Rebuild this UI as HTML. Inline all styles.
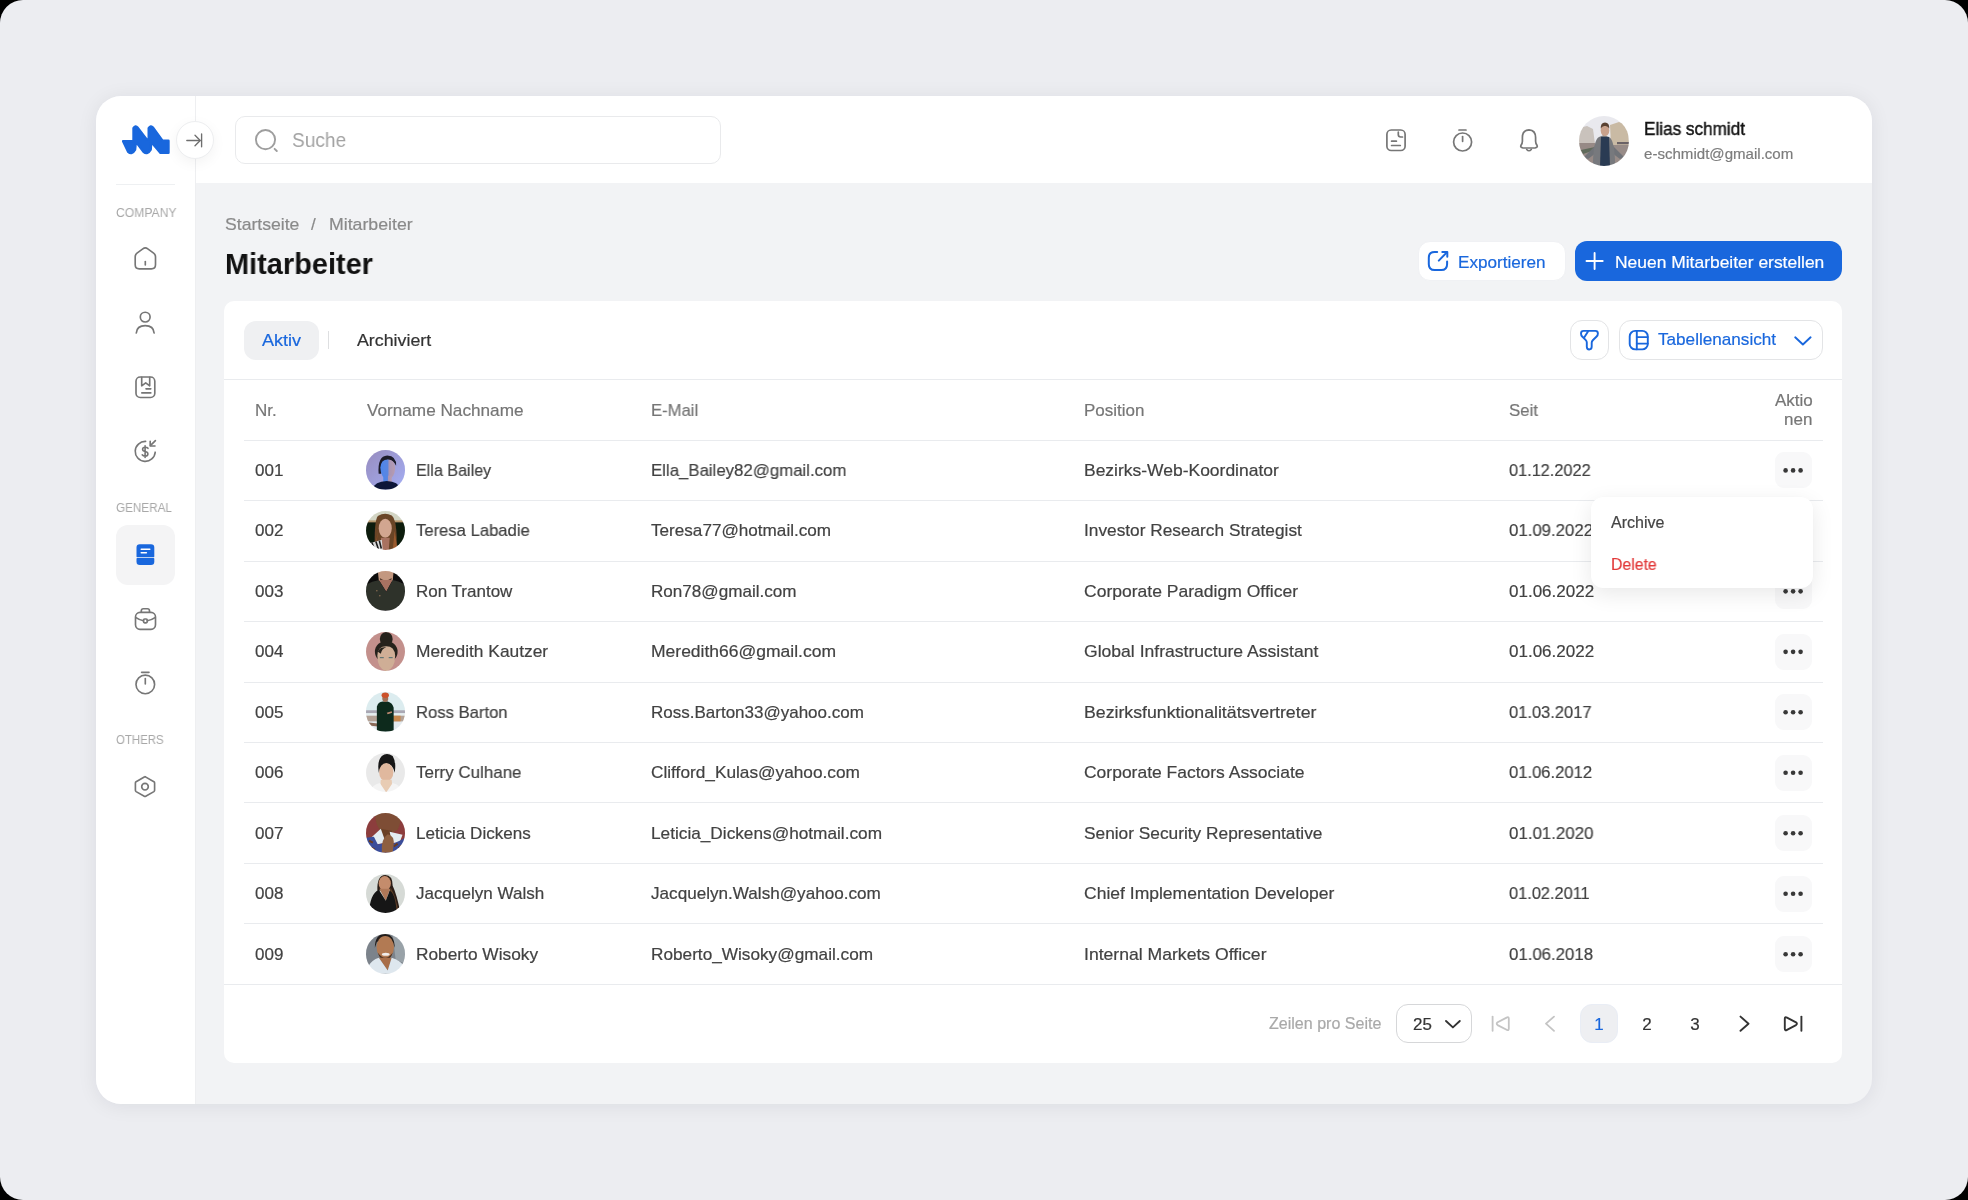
<!DOCTYPE html>
<html><head><meta charset="utf-8">
<style>
*{box-sizing:border-box;margin:0;padding:0}
html,body{width:1968px;height:1200px;overflow:hidden;background:#000}
body{font-family:"Liberation Sans",sans-serif}
.screen{position:absolute;left:0;top:0;width:1968px;height:1200px;background:#ECEDF1;border-radius:23px;overflow:hidden}
.app{position:absolute;left:96px;top:96px;width:1776px;height:1008px;border-radius:25px;background:#F2F3F5;overflow:hidden;box-shadow:0 2px 20px rgba(20,25,40,0.075)}
.side{position:absolute;left:0;top:0;width:100px;height:1008px;background:#fff;border-right:1px solid #EEEFF1}
.head{position:absolute;left:100px;top:0;width:1676px;height:87px;background:#fff}
.a{position:absolute}
.t{position:absolute;white-space:nowrap;line-height:1;will-change:transform;-webkit-text-stroke:0.2px currentColor}
.ln{position:absolute;height:1px;background:#E9EBEE}
.act{position:absolute;left:1774.5px;width:37px;height:36px;border-radius:9px;background:#F8F8F9}
.av{position:absolute;left:365.8px;width:39.5px;height:39.5px;border-radius:50%;overflow:hidden}
</style></head>
<body>
<svg width="0" height="0" style="position:absolute"><defs><filter id="soft" x="-5%" y="-5%" width="110%" height="110%"><feGaussianBlur stdDeviation="0.55"/></filter></defs></svg>
<div class="screen">
 <div class="app">
   <div class="side"></div>
   <div class="head"></div>
 </div>
 <!-- sidebar separator under logo -->
 <div class="a" style="left:116px;top:183.5px;width:59px;height:1px;background:#EEF0F2"></div>
 <!-- active nav -->
 <div class="a" style="left:115.8px;top:525px;width:59px;height:59.6px;border-radius:12px;background:#F4F4F5"></div>
 <!-- collapse button -->
 <div class="a" style="left:175.5px;top:121px;width:38px;height:38px;border-radius:50%;background:#fff;border:1px solid #EDEEF0;box-shadow:0 4px 14px rgba(0,0,0,0.05)"></div>
 <!-- search box -->
 <div class="a" style="left:234.5px;top:116.4px;width:486px;height:48px;border-radius:10px;background:#fff;border:1px solid #E9EAEC"></div>
 <!-- header avatar -->
 <div class="a" style="left:1578.8px;top:116px;width:49.8px;height:49.8px;border-radius:50%;overflow:hidden">
  <svg width="50" height="50" viewBox="0 0 50 50"><g filter="url(#soft)">
   <rect width="50" height="50" fill="#E9E9EE"/>
   <path d="M0 12 L8 10 L14 13 L16 28 L0 30Z" fill="#C9C2BC"/>
   <path d="M31 9 L40 6 L49 10 L50 30 L32 30Z" fill="#C9BAA4"/>
   <rect x="38" y="26" width="12" height="2.2" fill="#6A6266"/>
   <path d="M0 27 L16 27 L18 50 L0 50Z" fill="#978A86"/>
   <path d="M34 29 L50 29 L50 50 L32 50Z" fill="#988C88"/>
   <path d="M2 34 L16 31 L16 34 L4 38Z" fill="#5E6A5A"/>
   <path d="M14 50 L16 30 L7 39 L5 41 L9 43 L17 37 L17 50Z" fill="#707378"/>
   <path d="M36 50 L34 30 L43 39 L45 41 L41 43 L33 37 L33 50Z" fill="#707378"/>
   <path d="M14 50 Q14 24 20 21 L25 19 L30 21 Q36 24 36 50Z" fill="#77797D"/>
   <path d="M21 50 L22 21 L30 21 L31 50Z" fill="#2C3B52"/>
   <ellipse cx="26" cy="14.5" rx="4.3" ry="5.5" fill="#C9A28C"/>
   <path d="M21.7 12.5 Q21.5 6.5 26 6.5 Q30.5 6.5 30.3 12.5 Q28.5 9.5 26 10 Q23.5 9.5 21.7 12.5Z" fill="#5A4232"/>
  </g></svg>
 </div>
 <!-- buttons -->
 <div class="a" style="left:1417.5px;top:240.5px;width:148px;height:40.5px;border-radius:12px;background:#fff;border:1px solid #F0F1F4"></div>
 <div class="a" style="left:1574.8px;top:241.2px;width:267.7px;height:39.5px;border-radius:12px;background:#1967DD"></div>
 <!-- card -->
 <div class="a" style="left:224.2px;top:301px;width:1618px;height:761.5px;border-radius:10px;background:#fff"></div>
 <!-- tabs -->
 <div class="a" style="left:244.1px;top:320.6px;width:74.7px;height:39.1px;border-radius:12px;background:#EFF0F2"></div>
 <div class="a" style="left:328.3px;top:331.3px;width:1px;height:17.4px;background:#DEDFE1"></div>
 <div class="a" style="left:1569.7px;top:320.2px;width:39.8px;height:39.7px;border-radius:12px;border:1px solid #E3E4E6;background:#fff"></div>
 <div class="a" style="left:1619px;top:320.2px;width:203.5px;height:39.7px;border-radius:12px;border:1px solid #E3E4E6;background:#fff"></div>
 <!-- lines -->
 <div class="ln" style="left:224.2px;top:379.3px;width:1618px"></div>
 <div class=ln style='left:244.1px;top:439.6px;width:1578.5px'></div>
<div class=ln style='left:244.1px;top:500.08px;width:1578.5px'></div>
<div class=ln style='left:244.1px;top:560.56px;width:1578.5px'></div>
<div class=ln style='left:244.1px;top:621.04px;width:1578.5px'></div>
<div class=ln style='left:244.1px;top:681.52px;width:1578.5px'></div>
<div class=ln style='left:244.1px;top:742.00px;width:1578.5px'></div>
<div class=ln style='left:244.1px;top:802.48px;width:1578.5px'></div>
<div class=ln style='left:244.1px;top:862.96px;width:1578.5px'></div>
<div class=ln style='left:244.1px;top:923.44px;width:1578.5px'></div>
<div class=ln style='left:224.2px;top:983.92px;width:1618px'></div>
<div class=act style='top:452.20px'></div>
<div class=av style='top:450.45px'><svg width='39.5' height='39.5' viewBox='0 0 40 40'><g filter='url(#soft)'><defs><linearGradient id="g1" x1="0" y1="0" x2="1" y2="1"><stop offset="0" stop-color="#978CBE"/><stop offset="1" stop-color="#A4AEF4"/></linearGradient><linearGradient id="f1" x1="0" y1="0" x2="1" y2="0"><stop offset="0" stop-color="#4C86EC"/><stop offset="0.5" stop-color="#5A86E0"/><stop offset="0.6" stop-color="#A894B4"/><stop offset="1" stop-color="#B89CB0"/></linearGradient></defs><rect width="40" height="40" fill="url(#g1)"/><path d="M12.8 24 Q11.5 6 21.5 5.5 Q31 6 30.5 16 Q27 9.5 21 10 Q16 11 15.5 24Z" fill="#1D1B2A"/><path d="M14.5 18 Q15 9.5 22 9.5 Q29.5 9.5 29.5 18.5 Q29 28.5 22 30 Q15 28.5 14.5 18Z" fill="url(#f1)"/><path d="M17.5 26 L26 26 L26 33 L17.5 33Z" fill="url(#f1)"/><path d="M6 40 Q9 32 21 31.5 Q33 32 35 40Z" fill="#0E1838"/></g></svg></div>
<div class=act style='top:512.68px'></div>
<div class=av style='top:510.93px'><svg width='39.5' height='39.5' viewBox='0 0 40 40'><g filter='url(#soft)'><rect width="40" height="40" fill="#111A11"/><rect width="40" height="10.5" fill="#D3D5C4"/><rect y="9.5" width="40" height="2" fill="#B89A70"/><path d="M9 40 Q8 10 12 5 Q19 1 26 4.5 Q32 9 31 40Z" fill="#6A4426"/><path d="M10 40 L12 20 L9 40Z M29 20 L32 40 L27 40Z" fill="#9A5A2E"/><ellipse cx="19.5" cy="17.5" rx="6.6" ry="9.6" fill="#D2A690"/><path d="M15 27 L24 27 L23 40 L16 40Z" fill="#A87260"/><path d="M3 33 L16 29 L17 40 L6 40Z" fill="#DADADA"/><path d="M6 32 L9 40 M10 31 L13 40 M13.5 30 L15.5 38" stroke="#1A1A1A" stroke-width="1.6"/></g></svg></div>
<div class=act style='top:573.16px'></div>
<div class=av style='top:571.41px'><svg width='39.5' height='39.5' viewBox='0 0 40 40'><g filter='url(#soft)'><rect width="40" height="40" fill="#0B0B0B"/><path d="M12 0 H28 L27 10 Q20 13 13 10Z" fill="#C39880"/><path d="M14 7 Q20 12 26 7 L25.5 10.5 Q20 13 14.5 10.5Z" fill="#5A3E30"/><path d="M13 9 L27 9 L20.5 21Z" fill="#A87262"/><path d="M0 40 L0 14 Q6 10 13 9 L20.5 21 L27 9 Q34 10 40 14 L40 40Z" fill="#2E302B"/><circle cx="11" cy="20" r="0.8" fill="#8A7050"/><circle cx="14" cy="25" r="0.8" fill="#8A7050"/></g></svg></div>
<div class=act style='top:633.64px'></div>
<div class=av style='top:631.89px'><svg width='39.5' height='39.5' viewBox='0 0 40 40'><g filter='url(#soft)'><rect width="40" height="40" fill="#C3908C"/><ellipse cx="20.5" cy="7" rx="6.5" ry="7" fill="#28241E"/><ellipse cx="20.5" cy="20" rx="11.5" ry="11" fill="#28241E"/><path d="M11.5 24 Q12 14.5 20.5 14.5 Q29 14.5 29.5 24 Q29.5 37 20.5 40 Q11.5 37 11.5 24Z" fill="#CFAE96"/><path d="M12 20 Q14 15 20.5 15.5 Q16 17 15 22Z" fill="#28241E"/><rect x="14" y="25.5" width="4" height="1" fill="#4A6A70"/><rect x="23" y="25.5" width="4" height="1" fill="#4A6A70"/></g></svg></div>
<div class=act style='top:694.12px'></div>
<div class=av style='top:692.37px'><svg width='39.5' height='39.5' viewBox='0 0 40 40'><g filter='url(#soft)'><rect width="40" height="40" fill="#DCECEF"/><rect y="18.5" width="40" height="3" fill="#AAA8B4"/><rect y="21.5" width="40" height="3" fill="#E6EEF0"/><rect y="24" width="40" height="6" fill="#B4A296"/><rect x="27" y="24" width="8" height="6" fill="#C8884E"/><rect y="30" width="40" height="10" fill="#E4EAEE"/><path d="M3 31 L12 32 L12 35 L3 34Z" fill="#8A6A58"/><path d="M11 40 L11 15 Q12 10 17 9.5 L22 9.5 Q27 11 28 16 L28 40Z" fill="#0C2A1E"/><ellipse cx="19.5" cy="6.5" rx="3" ry="3.5" fill="#A07058"/><ellipse cx="19.5" cy="3.2" rx="3.7" ry="2.8" fill="#CC512A"/><path d="M21 21 L26 19.5 L26.5 21 L22 22.5Z" fill="#C08A70"/></g></svg></div>
<div class=act style='top:754.60px'></div>
<div class=av style='top:752.85px'><svg width='39.5' height='39.5' viewBox='0 0 40 40'><g filter='url(#soft)'><rect width="40" height="40" fill="#E9E9E9"/><path d="M13 20 Q11 8 16 3 Q21 -1 27 3 Q31 9 29 20 Q27 11 21 11 Q15 11 13 20Z" fill="#161616"/><ellipse cx="20.5" cy="19.5" rx="7.2" ry="9.3" fill="#E0B89E"/><path d="M15 27 L26 27 L27 40 L14 40Z" fill="#E8CCB4"/><path d="M4 40 Q6 32 14 30.5 L20.5 40 L27 30.5 Q35 32 36 40Z" fill="#F4F4F4"/></g></svg></div>
<div class=act style='top:815.08px'></div>
<div class=av style='top:813.33px'><svg width='39.5' height='39.5' viewBox='0 0 40 40'><g filter='url(#soft)'><rect width="40" height="40" fill="#8C3C3C"/><path d="M9 0 L34 0 Q36 10 32 17 Q26 21 18 20 Q12 17 10 8Z" fill="#7E4E34"/><path d="M14 16 L26 18 L27 26 L15 26Z" fill="#6A4028"/><path d="M4 26 L15 16 L20 30 L10 32Z" fill="#E4ECF2"/><path d="M24 19 L37 22 L34 30 L26 30Z" fill="#E4ECF2"/><path d="M0 40 L0 25 L8 24 L12 32 L20 30 L28 31 L34 28 L40 25 L40 40Z" fill="#3A4E9A"/><path d="M3 28 L7 30 M28 34 L32 31 M5 35 L9 37 M33 36 L36 33" stroke="#6A3A20" stroke-width="2"/><path d="M16 40 Q15 26 22 21.5 Q29 23 28 32 L27 40Z" fill="#8E5E40"/></g></svg></div>
<div class=act style='top:875.56px'></div>
<div class=av style='top:873.81px'><svg width='39.5' height='39.5' viewBox='0 0 40 40'><g filter='url(#soft)'><rect width="40" height="40" fill="#D6DAD6"/><path d="M11.5 17 Q11 1 19.5 1 Q27 1 27 12 Q31 20 35 40 L23 40 Q24 25 24 16Z" fill="#2A1E16"/><path d="M25 14 Q31 24 33 40 L27 40 Q27 26 24 18Z" fill="#5A3C28"/><ellipse cx="19" cy="9.5" rx="6.2" ry="7.5" fill="#C48C6C"/><path d="M13.5 15 L24.5 15 L20 27Z" fill="#B07858"/><path d="M3 40 Q4 20 13 16 L20 27 L24 17 Q30 20 31 40Z" fill="#141414"/></g></svg></div>
<div class=act style='top:936.04px'></div>
<div class=av style='top:934.29px'><svg width='39.5' height='39.5' viewBox='0 0 40 40'><g filter='url(#soft)'><rect width="40" height="40" fill="#7C838B"/><path d="M27 0 L40 0 L40 30 L30 26Z" fill="#99A2A8"/><path d="M9 14 Q9 0 19 0 Q29 0 29 14 L27 8 Q19 3 11 8Z" fill="#241E1A"/><ellipse cx="19.5" cy="13.5" rx="8.8" ry="11.5" fill="#B27A52"/><path d="M12 19 Q19.5 29 27 19 Q25 26 19.5 26.5 Q14 26 12 19Z" fill="#4A3020"/><ellipse cx="20" cy="20.5" rx="4" ry="1.6" fill="#F0ECEA"/><path d="M13 24 L26 24 L22 37Z" fill="#A86E48"/><path d="M2 33 Q6 26 13 24 L22 37 L26 24 Q35 27 38 32 L36 40 L4 40Z" fill="#DEE7EE"/></g></svg></div>
<svg class=a style='left:0;top:0' width='1968' height='1200'><g fill='#383838'><circle cx='1785.6' cy='470.40' r='2.3'/><circle cx='1793.1' cy='470.40' r='2.3'/><circle cx='1800.6' cy='470.40' r='2.3'/><circle cx='1785.6' cy='530.88' r='2.3'/><circle cx='1793.1' cy='530.88' r='2.3'/><circle cx='1800.6' cy='530.88' r='2.3'/><circle cx='1785.6' cy='591.36' r='2.3'/><circle cx='1793.1' cy='591.36' r='2.3'/><circle cx='1800.6' cy='591.36' r='2.3'/><circle cx='1785.6' cy='651.84' r='2.3'/><circle cx='1793.1' cy='651.84' r='2.3'/><circle cx='1800.6' cy='651.84' r='2.3'/><circle cx='1785.6' cy='712.32' r='2.3'/><circle cx='1793.1' cy='712.32' r='2.3'/><circle cx='1800.6' cy='712.32' r='2.3'/><circle cx='1785.6' cy='772.80' r='2.3'/><circle cx='1793.1' cy='772.80' r='2.3'/><circle cx='1800.6' cy='772.80' r='2.3'/><circle cx='1785.6' cy='833.28' r='2.3'/><circle cx='1793.1' cy='833.28' r='2.3'/><circle cx='1800.6' cy='833.28' r='2.3'/><circle cx='1785.6' cy='893.76' r='2.3'/><circle cx='1793.1' cy='893.76' r='2.3'/><circle cx='1800.6' cy='893.76' r='2.3'/><circle cx='1785.6' cy='954.24' r='2.3'/><circle cx='1793.1' cy='954.24' r='2.3'/><circle cx='1800.6' cy='954.24' r='2.3'/></g></svg>
 <!-- pagination -->
 <div class="a" style="left:1396.2px;top:1003.9px;width:75.7px;height:38.7px;border-radius:12px;border:1.3px solid #D6D7D9;background:#fff"></div>
 <div class="a" style="left:1579.6px;top:1003.9px;width:38.2px;height:39.2px;border-radius:12px;background:#EEEFF2;border:1px solid #E9EDF5"></div>
 <svg class="a" style="left:0;top:0" width="1968" height="1200" viewBox="0 0 1968 1200" fill="none" stroke-linecap="round" stroke-linejoin="round">
 <!-- logo -->
 <path d="M123.2 141.2 L133.6 141.2 L133.6 128.3 Q135.5 125.2 137.4 127.6 L146.6 139.5 L148.8 139.5 L148.8 128.3 Q150.8 125.2 152.8 127.6 L162.4 140.8 L168.4 140.8 L168.4 152.8 L160.6 152.8 L152.6 143.3 L151 143.3 L150.6 149.7 Q147.5 155 143.6 151.8 L137.2 143.3 L135.6 143.3 L135 149.7 Q132 155 128.2 151.8 Z" fill="#1967DD" stroke="#1967DD" stroke-width="2.6"/>
 <!-- collapse arrow -->
 <g stroke="#6E6E6E" stroke-width="1.35">
  <path d="M186.8 140.5 H200"/>
  <path d="M195 135.3 L200.2 140.5 L195 145.7"/>
  <path d="M201.6 134 V146.8"/>
 </g>
 <!-- search -->
 <g stroke="#9E9E9E" stroke-width="1.9">
  <circle cx="265.5" cy="139.6" r="9.6"/>
  <path d="M274.6 148.8 L276.8 151"/>
 </g>
 <!-- header icons -->
 <g stroke="#767676" stroke-width="1.7">
  <rect x="1386.9" y="130" width="18.2" height="20.5" rx="4.3"/>
  <path d="M1398.3 132.2 V134.6 Q1398.3 137 1400.7 137 H1402.5"/>
  <path d="M1391.6 141.2 H1396.4"/>
  <path d="M1391.6 145.5 H1400.3"/>
  <circle cx="1462.6" cy="142" r="9"/>
  <path d="M1459 130 H1466"/>
  <path d="M1462.6 136.6 V141.3"/>
  <path d="M1529 129.8 Q1522.4 130.2 1522.4 137.5 V141.2 Q1522.4 143.3 1521 145.3 Q1520 147.5 1523 148 H1535 Q1538 147.5 1537 145.3 Q1535.6 143.3 1535.6 141.2 V137.5 Q1535.6 130.2 1529 129.8 Z"/>
  <path d="M1526.7 149.5 Q1529 152 1531.3 149.5"/>
 </g>
 <!-- sidebar icons -->
 <g stroke="#767676" stroke-width="1.65">
  <!-- home -->
  <path d="M135.2 256.8 Q135.2 254.6 137 253.2 L142.8 248.9 Q145.3 247 147.8 248.9 L153.6 253.2 Q155.5 254.6 155.5 256.8 V264.8 Q155.5 268.9 151.4 268.9 H139.3 Q135.2 268.9 135.2 264.8 Z"/>
  <path d="M145.3 261.6 V265"/>
  <!-- user -->
  <circle cx="145.2" cy="317.1" r="4.9"/>
  <path d="M136.3 333 Q136.8 325.6 145.2 325.6 Q153.6 325.6 154.1 333"/>
  <!-- box -->
  <rect x="136" y="377" width="18.8" height="20.5" rx="4.2"/>
  <path d="M141.7 377.3 V385.8 L145.7 382.8 L149.7 385.8 V377.3"/>
  <path d="M146 388.8 H150.8"/>
  <path d="M141.8 392.9 H150.8"/>
  <!-- dollar -->
  <path d="M155.2 452.2 A10 10 0 1 1 145.6 441.4"/>
  <path d="M155.4 440.6 L150.6 445.4"/>
  <path d="M150.2 441.2 V446 H155"/>
  <path d="M148 448.3 Q147.2 447.2 145.1 447.2 Q142.6 447.2 142.6 449.3 Q142.6 451.1 145.1 451.5 Q147.9 451.9 147.9 454 Q147.9 456.1 145.1 456.1 Q143.1 456.1 142.2 454.8 M145.1 445.7 V457.5" stroke-width="1.6"/>
  <!-- briefcase -->
  <rect x="135.5" y="612.4" width="20" height="16.9" rx="4.5"/>
  <path d="M141.3 612.2 V610.8 Q141.3 608.7 143.4 608.7 H147.4 Q149.5 608.7 149.5 610.8 V612.2"/>
  <path d="M136 617.6 Q140 620.3 143.6 620.8 M147.2 620.8 Q151 620.3 155 617.6"/>
  <rect x="143.5" y="619" width="3.8" height="3.8" rx="1.2"/>
  <!-- timer -->
  <circle cx="145.3" cy="684.4" r="9.3"/>
  <path d="M141.6 672.3 H149"/>
  <path d="M145.3 678.6 V684"/>
  <!-- settings -->
  <path d="M145 776.6 L153.9 781.7 Q154.6 782.2 154.6 783 V790.3 Q154.6 791.1 153.9 791.6 L145.7 796.3 Q145 796.7 144.3 796.3 L136.1 791.6 Q135.4 791.1 135.4 790.3 V783 Q135.4 782.2 136.1 781.7 L144.3 777 Q145 776.6 145.7 777 Z"/>
  <circle cx="145" cy="786.7" r="3.3"/>
 </g>
 <!-- active nav icon -->
 <g>
  <path d="M139.8 544.3 H151 Q154.3 544.3 154.3 547.6 V556.6 Q154.3 557.3 153.6 557.2 H137.2 Q136.5 557.3 136.5 556.6 V547.6 Q136.5 544.3 139.8 544.3 Z" fill="#1967DD"/>
  <path d="M137.2 558 H153.6 Q154.3 558 154.3 558.7 V561.7 Q154.3 565 151 565 H139.8 Q136.5 565 136.5 561.7 V558.7 Q136.5 558 137.2 558 Z" fill="#1967DD"/>
  <path d="M141.2 549.2 H149.8 M141.2 552.7 H146.4" stroke="#fff" stroke-width="1.5"/>
 </g>
 <!-- export icon -->
 <g stroke="#1967DD" stroke-width="2">
  <path d="M1437.2 251.9 H1434.6 Q1428.8 251.9 1428.8 257.7 V264.3 Q1428.8 270.1 1434.6 270.1 H1441.3 Q1447.1 270.1 1447.1 264.3 V261.5"/>
  <path d="M1438.8 260.6 L1446.6 252.6"/>
  <path d="M1442.3 251.9 H1447.3 V256.7"/>
 </g>
 <!-- plus -->
 <g stroke="#fff" stroke-width="1.9">
  <path d="M1586.5 261 H1602.7 M1594.6 252.9 V269.1"/>
 </g>
 <!-- filter -->
 <g stroke="#1967DD" stroke-width="1.9">
  <path d="M1583.6 330.9 H1595.4 Q1597.9 330.9 1597.9 333.4 Q1597.9 335.2 1596.6 336.5 L1592.8 340.2 Q1591.7 341.3 1591.7 342.8 V346.6 Q1591.7 349.5 1589.2 349.5 Q1586.8 349.5 1586.8 346.8 V342.6 Q1586.8 341.2 1585.8 340.2 L1582.2 336.5 Q1581 335.2 1581 333.4 Q1581 330.9 1583.6 330.9 Z"/>
  <path d="M1588 331.4 L1584.2 337.5"/>
 </g>
 <!-- table icon -->
 <g stroke="#1967DD" stroke-width="1.9">
  <rect x="1629.7" y="330.9" width="18.1" height="18.5" rx="5.5"/>
  <path d="M1636.8 331 V349.3"/>
  <path d="M1636.8 337.1 H1647.7 M1636.8 343.6 H1647.7"/>
  <path d="M1795.2 337.3 L1802.9 344.5 L1810.6 337.3"/>
 </g>
 <!-- pagination icons -->
 <g stroke="#333" stroke-width="1.9">
  <path d="M1446 1021 L1452.9 1027.4 L1459.8 1021"/>
 </g>
 <g stroke="#C4C4C4" stroke-width="1.8">
  <path d="M1492.6 1016.6 V1030.8"/>
  <path d="M1508.8 1018.8 V1028.6 Q1508.8 1031 1506.6 1029.8 L1497.6 1025.1 Q1495.8 1023.7 1497.6 1022.3 L1506.6 1017.6 Q1508.8 1016.4 1508.8 1018.8 Z"/>
  <path d="M1554 1016.6 L1546 1023.7 L1554 1030.8"/>
 </g>
 <g stroke="#333" stroke-width="1.9">
  <path d="M1740.5 1016.6 L1748.5 1023.7 L1740.5 1030.8"/>
  <path d="M1801.4 1016.6 V1030.8"/>
  <path d="M1784.8 1018.8 V1028.6 Q1784.8 1031 1787 1029.8 L1796 1025.1 Q1797.8 1023.7 1796 1022.3 L1787 1017.6 Q1784.8 1016.4 1784.8 1018.8 Z"/>
 </g>
</svg>

 <div class=t id=t0 style='left:291.90px;top:129.95px;font-size:20.5px;color:#A3A3A3;font-weight:400;transform:scaleX(0.9322);transform-origin:left center;-webkit-text-stroke:0;'>Suche</div><div class=t id=t1 style='left:1644.00px;top:121.19px;font-size:17.5px;color:#161616;font-weight:400;transform:scaleX(0.9797);transform-origin:left center;-webkit-text-stroke:0.45px #161616;'>Elias schmidt</div><div class=t id=t2 style='left:1644.00px;top:146.00px;font-size:15px;color:#7C7C7C;font-weight:400;transform:scaleX(1.0048);transform-origin:left center;'>e-schmidt@gmail.com</div><div class=t id=t3 style='left:116.00px;top:206.92px;font-size:12.5px;color:#A8A8A8;font-weight:400;transform:scaleX(0.9714);transform-origin:left center;-webkit-text-stroke:0;'>COMPANY</div><div class=t id=t4 style='left:115.80px;top:502.32px;font-size:12.5px;color:#A8A8A8;font-weight:400;transform:scaleX(0.9356);transform-origin:left center;-webkit-text-stroke:0;'>GENERAL</div><div class=t id=t5 style='left:115.90px;top:734.32px;font-size:12.5px;color:#A8A8A8;font-weight:400;transform:scaleX(0.9137);transform-origin:left center;-webkit-text-stroke:0;'>OTHERS</div><div class=t id=t6 style='left:225.00px;top:216.21px;font-size:17px;color:#8A8A8A;font-weight:400;transform:scaleX(1.0360);transform-origin:left center;'>Startseite</div><div class=t id=t7 style='left:310.80px;top:216.21px;font-size:17px;color:#8A8A8A;font-weight:400;'>/</div><div class=t id=t8 style='left:328.70px;top:216.21px;font-size:17px;color:#8A8A8A;font-weight:400;transform:scaleX(1.0422);transform-origin:left center;'>Mitarbeiter</div><div class=t id=t9 style='left:225.40px;top:249.03px;font-size:29.5px;color:#111111;font-weight:700;transform:scaleX(0.9812);transform-origin:left center;-webkit-text-stroke:0;'>Mitarbeiter</div><div class=t id=t10 style='left:1458.40px;top:253.51px;font-size:17px;color:#1967DD;font-weight:400;transform:scaleX(1.0076);transform-origin:left center;'>Exportieren</div><div class=t id=t11 style='left:1615.00px;top:253.51px;font-size:17px;color:#FFFFFF;font-weight:400;transform:scaleX(1.0254);transform-origin:left center;'>Neuen Mitarbeiter erstellen</div><div class=t id=t12 style='left:261.60px;top:332.21px;font-size:17px;color:#1967DD;font-weight:400;transform:scaleX(1.0612);transform-origin:left center;'>Aktiv</div><div class=t id=t13 style='left:356.70px;top:332.21px;font-size:17px;color:#333333;font-weight:400;transform:scaleX(1.0471);transform-origin:left center;'>Archiviert</div><div class=t id=t14 style='left:1657.90px;top:331.31px;font-size:17px;color:#1967DD;font-weight:400;transform:scaleX(1.0077);transform-origin:left center;'>Tabellenansicht</div><div class=t id=t15 style='left:254.50px;top:401.91px;font-size:17px;color:#767676;font-weight:400;'>Nr.</div><div class=t id=t16 style='left:366.50px;top:401.91px;font-size:17px;color:#767676;font-weight:400;transform:scaleX(1.0098);transform-origin:left center;'>Vorname Nachname</div><div class=t id=t17 style='left:651.20px;top:401.91px;font-size:17px;color:#767676;font-weight:400;transform:scaleX(0.9798);transform-origin:left center;'>E-Mail</div><div class=t id=t18 style='left:1083.70px;top:401.91px;font-size:17px;color:#767676;font-weight:400;'>Position</div><div class=t id=t19 style='left:1509.30px;top:401.91px;font-size:17px;color:#767676;font-weight:400;transform:scaleX(0.9899);transform-origin:left center;'>Seit</div><div class=t id=t20 style='right:155.70px;top:391.61px;font-size:17px;color:#767676;font-weight:400;'>Aktio</div><div class=t id=t21 style='right:155.70px;top:411.41px;font-size:17px;color:#767676;font-weight:400;'>nen</div><div class=t id=t22 style='left:254.50px;top:462.01px;font-size:17px;color:#424242;font-weight:400;'>001</div><div class=t id=t23 style='left:415.80px;top:462.01px;font-size:17px;color:#424242;font-weight:400;transform:scaleX(0.9474);transform-origin:left center;'>Ella Bailey</div><div class=t id=t24 style='left:651.20px;top:462.01px;font-size:17px;color:#424242;font-weight:400;transform:scaleX(0.9882);transform-origin:left center;'>Ella_Bailey82@gmail.com</div><div class=t id=t25 style='left:1083.70px;top:462.01px;font-size:17px;color:#424242;font-weight:400;transform:scaleX(1.0275);transform-origin:left center;'>Bezirks-Web-Koordinator</div><div class=t id=t26 style='left:1509.00px;top:462.01px;font-size:17px;color:#424242;font-weight:400;transform:scaleX(0.9589);transform-origin:left center;'>01.12.2022</div><div class=t id=t27 style='left:254.50px;top:522.49px;font-size:17px;color:#424242;font-weight:400;'>002</div><div class=t id=t28 style='left:415.80px;top:522.49px;font-size:17px;color:#424242;font-weight:400;transform:scaleX(0.9788);transform-origin:left center;'>Teresa Labadie</div><div class=t id=t29 style='left:651.20px;top:522.49px;font-size:17px;color:#424242;font-weight:400;transform:scaleX(1.0070);transform-origin:left center;'>Teresa77@hotmail.com</div><div class=t id=t30 style='left:1083.70px;top:522.49px;font-size:17px;color:#424242;font-weight:400;transform:scaleX(1.0155);transform-origin:left center;'>Investor Research Strategist</div><div class=t id=t31 style='left:1509.00px;top:522.49px;font-size:17px;color:#424242;font-weight:400;transform:scaleX(0.9871);transform-origin:left center;'>01.09.2022</div><div class=t id=t32 style='left:254.50px;top:582.97px;font-size:17px;color:#424242;font-weight:400;'>003</div><div class=t id=t33 style='left:415.80px;top:582.97px;font-size:17px;color:#424242;font-weight:400;'>Ron Trantow</div><div class=t id=t34 style='left:651.20px;top:582.97px;font-size:17px;color:#424242;font-weight:400;transform:scaleX(1.0053);transform-origin:left center;'>Ron78@gmail.com</div><div class=t id=t35 style='left:1083.70px;top:582.97px;font-size:17px;color:#424242;font-weight:400;transform:scaleX(1.0310);transform-origin:left center;'>Corporate Paradigm Officer</div><div class=t id=t36 style='left:1509.00px;top:582.97px;font-size:17px;color:#424242;font-weight:400;'>01.06.2022</div><div class=t id=t37 style='left:254.50px;top:643.45px;font-size:17px;color:#424242;font-weight:400;'>004</div><div class=t id=t38 style='left:415.80px;top:643.45px;font-size:17px;color:#424242;font-weight:400;transform:scaleX(1.0204);transform-origin:left center;'>Meredith Kautzer</div><div class=t id=t39 style='left:651.20px;top:643.45px;font-size:17px;color:#424242;font-weight:400;transform:scaleX(1.0290);transform-origin:left center;'>Meredith66@gmail.com</div><div class=t id=t40 style='left:1083.70px;top:643.45px;font-size:17px;color:#424242;font-weight:400;transform:scaleX(1.0332);transform-origin:left center;'>Global Infrastructure Assistant</div><div class=t id=t41 style='left:1509.00px;top:643.45px;font-size:17px;color:#424242;font-weight:400;'>01.06.2022</div><div class=t id=t42 style='left:254.50px;top:703.93px;font-size:17px;color:#424242;font-weight:400;'>005</div><div class=t id=t43 style='left:415.80px;top:703.93px;font-size:17px;color:#424242;font-weight:400;transform:scaleX(0.9792);transform-origin:left center;'>Ross Barton</div><div class=t id=t44 style='left:651.20px;top:703.93px;font-size:17px;color:#424242;font-weight:400;'>Ross.Barton33@yahoo.com</div><div class=t id=t45 style='left:1083.70px;top:703.93px;font-size:17px;color:#424242;font-weight:400;transform:scaleX(1.0422);transform-origin:left center;'>Bezirksfunktionalitätsvertreter</div><div class=t id=t46 style='left:1509.00px;top:703.93px;font-size:17px;color:#424242;font-weight:400;transform:scaleX(0.9695);transform-origin:left center;'>01.03.2017</div><div class=t id=t47 style='left:254.50px;top:764.41px;font-size:17px;color:#424242;font-weight:400;'>006</div><div class=t id=t48 style='left:415.80px;top:764.41px;font-size:17px;color:#424242;font-weight:400;transform:scaleX(0.9969);transform-origin:left center;'>Terry Culhane</div><div class=t id=t49 style='left:651.20px;top:764.41px;font-size:17px;color:#424242;font-weight:400;transform:scaleX(1.0144);transform-origin:left center;'>Clifford_Kulas@yahoo.com</div><div class=t id=t50 style='left:1083.70px;top:764.41px;font-size:17px;color:#424242;font-weight:400;transform:scaleX(1.0280);transform-origin:left center;'>Corporate Factors Associate</div><div class=t id=t51 style='left:1509.00px;top:764.41px;font-size:17px;color:#424242;font-weight:400;transform:scaleX(0.9754);transform-origin:left center;'>01.06.2012</div><div class=t id=t52 style='left:254.50px;top:824.89px;font-size:17px;color:#424242;font-weight:400;'>007</div><div class=t id=t53 style='left:415.80px;top:824.89px;font-size:17px;color:#424242;font-weight:400;transform:scaleX(1.0041);transform-origin:left center;'>Leticia Dickens</div><div class=t id=t54 style='left:651.20px;top:824.89px;font-size:17px;color:#424242;font-weight:400;transform:scaleX(1.0133);transform-origin:left center;'>Leticia_Dickens@hotmail.com</div><div class=t id=t55 style='left:1083.70px;top:824.89px;font-size:17px;color:#424242;font-weight:400;transform:scaleX(1.0173);transform-origin:left center;'>Senior Security Representative</div><div class=t id=t56 style='left:1509.00px;top:824.89px;font-size:17px;color:#424242;font-weight:400;transform:scaleX(0.9918);transform-origin:left center;'>01.01.2020</div><div class=t id=t57 style='left:254.50px;top:885.37px;font-size:17px;color:#424242;font-weight:400;'>008</div><div class=t id=t58 style='left:415.80px;top:885.37px;font-size:17px;color:#424242;font-weight:400;transform:scaleX(1.0033);transform-origin:left center;'>Jacquelyn Walsh</div><div class=t id=t59 style='left:651.20px;top:885.37px;font-size:17px;color:#424242;font-weight:400;transform:scaleX(1.0066);transform-origin:left center;'>Jacquelyn.Walsh@yahoo.com</div><div class=t id=t60 style='left:1083.70px;top:885.37px;font-size:17px;color:#424242;font-weight:400;transform:scaleX(1.0306);transform-origin:left center;'>Chief Implementation Developer</div><div class=t id=t61 style='left:1509.00px;top:885.37px;font-size:17px;color:#424242;font-weight:400;transform:scaleX(0.9627);transform-origin:left center;'>01.02.2011</div><div class=t id=t62 style='left:254.50px;top:945.85px;font-size:17px;color:#424242;font-weight:400;'>009</div><div class=t id=t63 style='left:415.80px;top:945.85px;font-size:17px;color:#424242;font-weight:400;transform:scaleX(1.0176);transform-origin:left center;'>Roberto Wisoky</div><div class=t id=t64 style='left:651.20px;top:945.85px;font-size:17px;color:#424242;font-weight:400;transform:scaleX(1.0121);transform-origin:left center;'>Roberto_Wisoky@gmail.com</div><div class=t id=t65 style='left:1083.70px;top:945.85px;font-size:17px;color:#424242;font-weight:400;transform:scaleX(1.0348);transform-origin:left center;'>Internal Markets Officer</div><div class=t id=t66 style='left:1509.00px;top:945.85px;font-size:17px;color:#424242;font-weight:400;transform:scaleX(0.9871);transform-origin:left center;'>01.06.2018</div><div class=t id=t67 style='left:1269.20px;top:1016.26px;font-size:16px;color:#A9A9A9;font-weight:400;transform:scaleX(1.0030);transform-origin:left center;'>Zeilen pro Seite</div><div class=t id=t68 style='left:1413.30px;top:1015.61px;font-size:17px;color:#333333;font-weight:400;transform:scaleX(0.9936);transform-origin:left center;'>25</div><div class=t id=t69 style='left:1548.70px;width:100px;text-align:center;top:1015.61px;font-size:17px;color:#1967DD;font-weight:400;'>1</div><div class=t id=t70 style='left:1596.70px;width:100px;text-align:center;top:1015.61px;font-size:17px;color:#333333;font-weight:400;'>2</div><div class=t id=t71 style='left:1644.80px;width:100px;text-align:center;top:1015.61px;font-size:17px;color:#333333;font-weight:400;'>3</div>
 <!-- dropdown menu -->
 <div class="a" style="left:1591px;top:497px;width:221.5px;height:90.8px;border-radius:12px;background:#fff;box-shadow:0 6px 22px rgba(0,0,0,0.09),0 0 2px rgba(0,0,0,0.03)"></div>
 <div class=t id=t72 style='left:1611.30px;top:514.66px;font-size:16px;color:#444444;font-weight:400;'>Archive</div><div class=t id=t73 style='left:1611.30px;top:557.26px;font-size:16px;color:#E23A3A;font-weight:400;transform:scaleX(0.9881);transform-origin:left center;'>Delete</div>
</div>
</body></html>
